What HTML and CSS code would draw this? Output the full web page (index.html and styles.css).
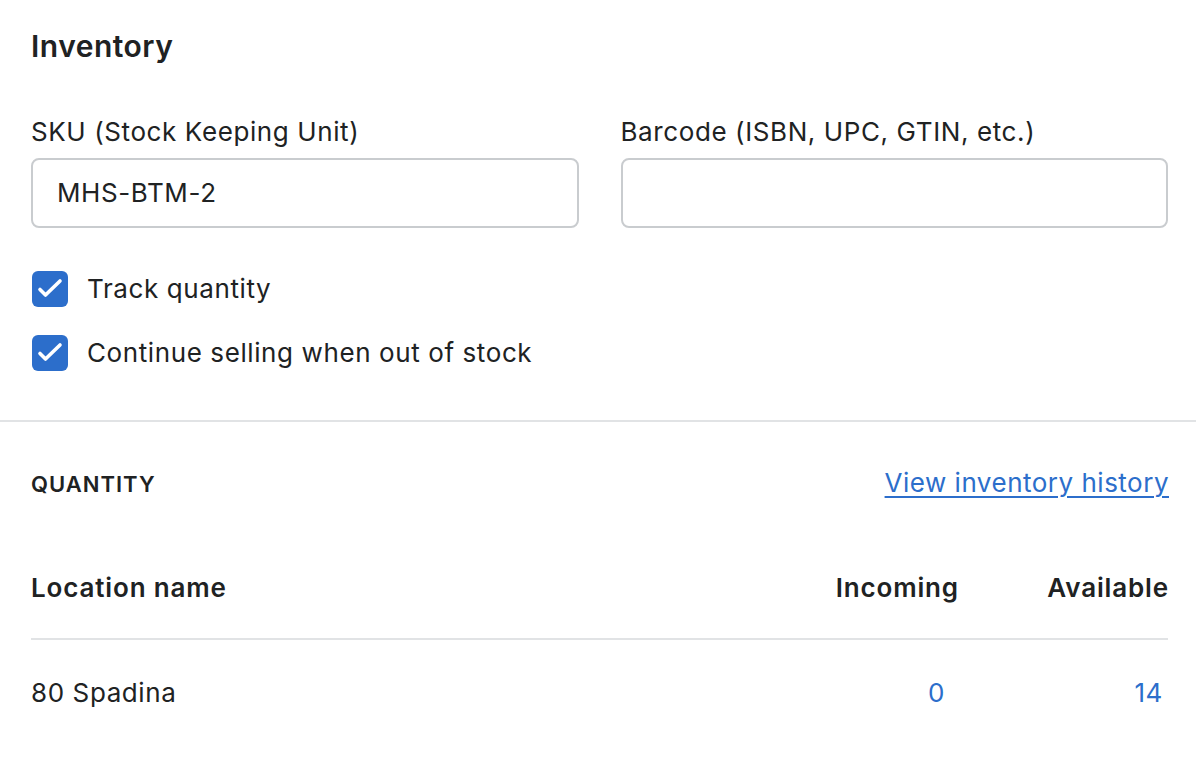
FILE: index.html
```html
<!DOCTYPE html>
<html>
<head>
<meta charset="utf-8">
<link rel="stylesheet" href="styles.css">
</head>
<body>
<div class="card">
  <section class="section top">
    <h2 class="title">Inventory</h2>
    <div class="fields">
      <div class="field">
        <label class="label">SKU (Stock Keeping Unit)</label>
        <div class="input">MHS-BTM-2</div>
      </div>
      <div class="field">
        <label class="label">Barcode (ISBN, UPC, GTIN, etc.)</label>
        <div class="input"></div>
      </div>
    </div>
    <div class="checks">
      <div class="check">
        <span class="box"><svg viewBox="0 0 36 36" width="36" height="36"><path d="M8 18.5l5.5 5.5 14.5-14" fill="none" stroke="#fff" stroke-width="3.6" stroke-linecap="round" stroke-linejoin="round"/></svg></span>
        <span class="check-label">Track quantity</span>
      </div>
      <div class="check">
        <span class="box"><svg viewBox="0 0 36 36" width="36" height="36"><path d="M8 18.5l5.5 5.5 14.5-14" fill="none" stroke="#fff" stroke-width="3.6" stroke-linecap="round" stroke-linejoin="round"/></svg></span>
        <span class="check-label">Continue selling when out of stock</span>
      </div>
    </div>
  </section>
  <section class="section bottom">
    <div class="qty-head">
      <span class="subheading">QUANTITY</span>
      <a class="link" href="#">View inventory history</a>
    </div>
    <div class="table">
      <div class="row head">
        <span class="c-name">Location name</span>
        <span class="c-inc">Incoming</span>
        <span class="c-av">Available</span>
      </div>
      <div class="row body">
        <span class="c-name">80 Spadina</span>
        <span class="c-inc num">0</span>
        <span class="c-av num">14</span>
      </div>
    </div>
  </section>
</div>
</body>
</html>
```
FILE: styles.css
```css
html, body {
  margin: 0;
  padding: 0;
  background: #ffffff;
}
body {
  font-family: Inter, "Noto Sans", sans-serif;
  color: #202223;
  font-size: 26px;
  letter-spacing: 0.6px;
}
.section {
  padding: 0 28px 0 31px;
}
.top {
  padding-top: 24px;
  padding-bottom: 49px;
  border-bottom: 2px solid #e1e3e5;
}
.title {
  margin: 0;
  font-size: 30px;
  line-height: 44px;
  font-weight: 600;
  letter-spacing: 0.5px;
}
.fields {
  display: flex;
  gap: 42px;
  margin-top: 44px;
}
.field {
  flex: 1;
  display: flex;
  flex-direction: column;
}
.label {
  line-height: 40px;
  margin-bottom: 6px;
}
.input {
  box-sizing: border-box;
  height: 70px;
  border: 2px solid #c9cccf;
  border-radius: 8px;
  padding: 0 24px;
  display: flex;
  align-items: center;
  line-height: 40px;
}
.checks {
  margin-top: 43px;
  display: flex;
  flex-direction: column;
  gap: 28px;
}
.check {
  display: flex;
  align-items: center;
  gap: 19px;
  height: 36px;
}
.box {
  width: 36px;
  height: 36px;
  border-radius: 6px;
  background: #2c6ecb;
  display: flex;
  margin-left: 1px;
}
.check-label {
  line-height: 40px;
}
.bottom {
  padding-top: 40px;
}
.qty-head {
  display: flex;
  justify-content: space-between;
  align-items: center;
  height: 44px;
}
.subheading {
  font-size: 22px;
  font-weight: 600;
  letter-spacing: 1px;
}
.link {
  color: #2c6ecb;
  text-decoration: underline;
  text-underline-offset: 4px;
  text-decoration-thickness: 2px;
  letter-spacing: 0.5px;
  margin-top: -3px;
  margin-right: -1px;
}
.table {
  margin-top: 51px;
}
.row {
  display: flex;
  align-items: center;
}
.row.head {
  font-weight: 600;
  height: 60px;
  padding-bottom: 21px;
  border-bottom: 2px solid #e1e3e5;
  letter-spacing: 0.85px;
}
.row.head .c-inc,
.row.head .c-av {
  margin-right: -1px;
}
.row.body {
  height: 104px;
}
.c-name {
  flex: 1;
}
.c-inc {
  width: 130px;
  text-align: right;
}
.c-av {
  width: 211px;
  text-align: right;
}
.num {
  color: #2c6ecb;
}
.c-inc.num {
  padding-right: 12px;
  width: 118px;
}
.c-av.num {
  padding-right: 5px;
  width: 206px;
}
```
